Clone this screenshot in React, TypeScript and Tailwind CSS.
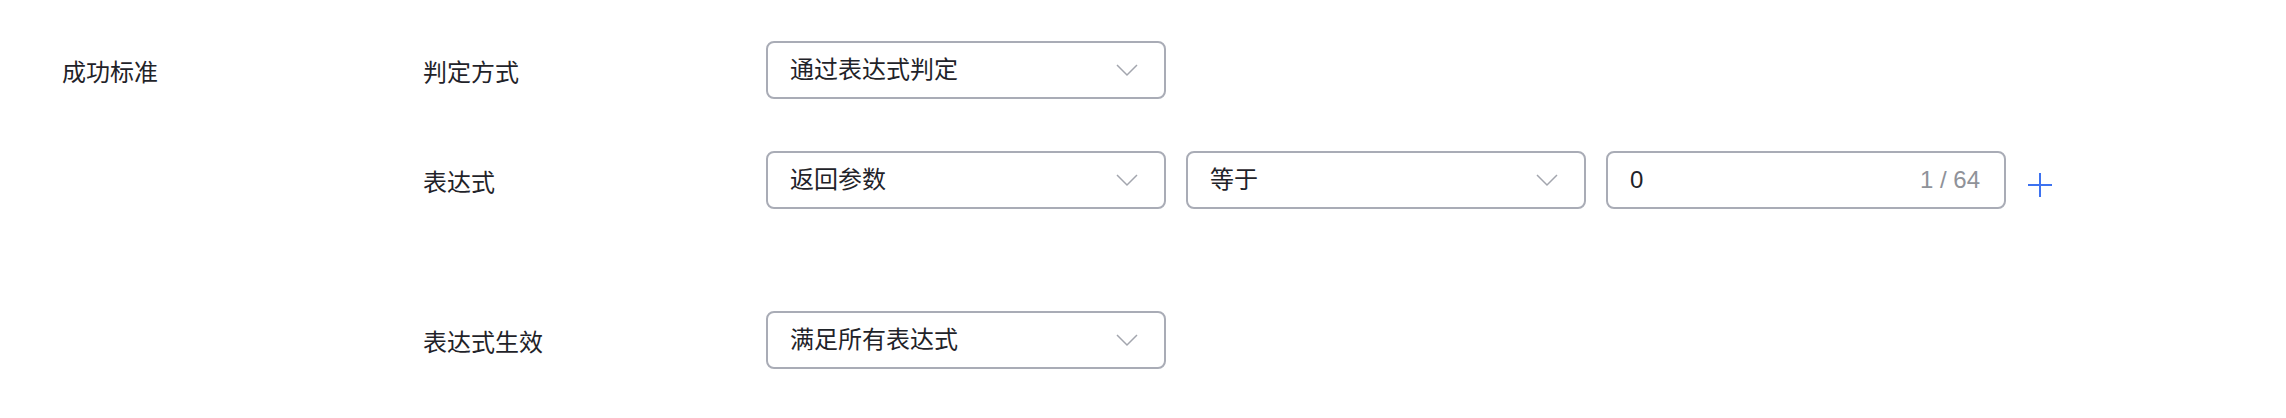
import React from "react";

const Chevron = () => (
  <svg width="22" height="13" viewBox="0 0 22 13" fill="none" className="shrink-0">
    <polyline points="1,1 11,11 21,1" stroke="#a3a6ae" strokeWidth="1.5" fill="none" />
  </svg>
);

const Select = ({ text, w = "w-[400px]" }: { text: string; w?: string }) => (
  <div
    className={`${w} h-[58px] flex items-center justify-between pl-[22px] pr-[26px] border-2 border-[#a9acb6] rounded-[8px] bg-white`}
  >
    <span className="text-[#1f2329]">{text}</span>
    <Chevron />
  </div>
);

export default function App() {
  return (
    <div
      className="w-full h-[418px] bg-white text-[24px] text-[#1f2329] flex"
      style={{ fontFamily: '"Liberation Sans", "Noto Sans CJK SC", sans-serif' }}
    >
      <div className="w-[423px] pl-[62px] pt-[41px]">
        <div className="h-[58px] flex items-center pt-[5px]">成功标准</div>
      </div>
      <div className="flex flex-col pt-[41px]">
        <div className="flex items-center">
          <div className="w-[343px] pt-[5px]">判定方式</div>
          <Select text="通过表达式判定" />
        </div>
        <div className="flex items-center mt-[52px]">
          <div className="w-[343px] pt-[5px]">表达式</div>
          <div className="flex items-center gap-[20px]">
            <Select text="返回参数" />
            <Select text="等于" />
            <div className="w-[400px] h-[58px] flex items-center justify-between pl-[22px] pr-[24px] border-2 border-[#a9acb6] rounded-[8px] bg-white">
              <span className="text-[#1f2329]">0</span>
              <span className="text-[#8f9299]">1 / 64</span>
            </div>
          </div>
          <svg width="24" height="24" viewBox="0 0 24 24" className="ml-[22px] mt-[10px]">
            <line x1="12" y1="0" x2="12" y2="24" stroke="#3d72f0" strokeWidth="2" />
            <line x1="0" y1="12" x2="24" y2="12" stroke="#3d72f0" strokeWidth="2" />
          </svg>
        </div>
        <div className="flex items-center mt-[102px]">
          <div className="w-[343px] pt-[5px]">表达式生效</div>
          <Select text="满足所有表达式" />
        </div>
      </div>
    </div>
  );
}
